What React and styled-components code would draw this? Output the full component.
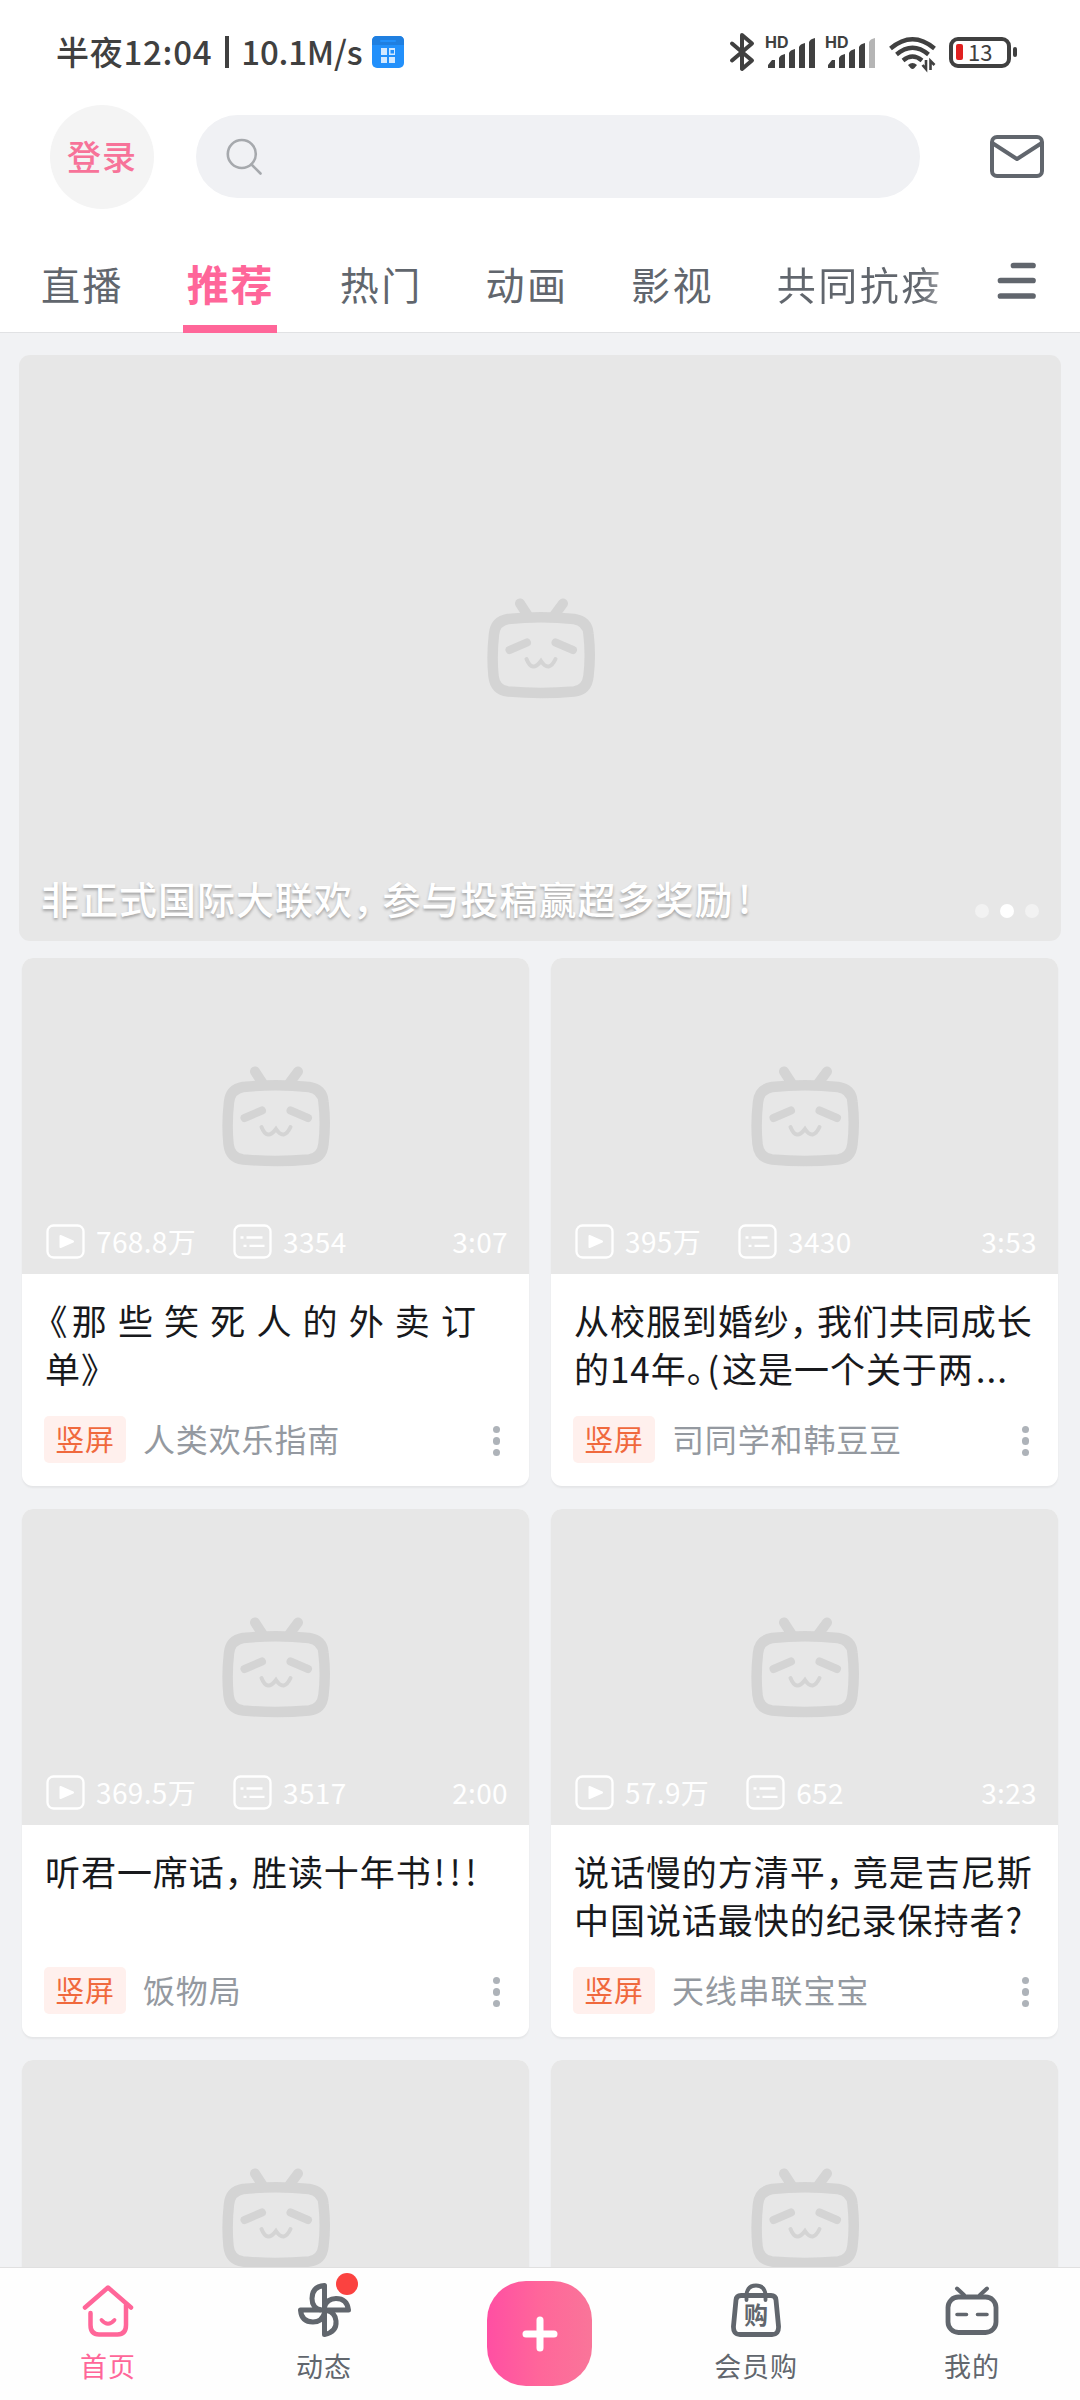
import React from 'react'
import styled, { createGlobalStyle, css } from 'styled-components'

const GlobalStyle = createGlobalStyle`
  * {
    box-sizing: border-box;
  }
  body {
    margin: 0;
    background: #f1f2f4;
    font-family: "Noto Sans CJK SC", "Noto Sans", sans-serif;
  }
`

const Page = styled.div`
  width: 1080px;
  height: 2400px;
  display: flex;
  flex-direction: column;
  overflow: hidden;
  background: #f1f2f4;
`

/* header */
const Header = styled.header`
  height: 333px;
  flex: none;
  background: #fff;
  border-bottom: 1px solid #e1e2e4;
`
const StatusBar = styled.div`
  height: 105px;
  padding: 0 63px 2px 56px;
  display: flex;
  align-items: center;
  justify-content: space-between;
  color: #404040;
`
const StatusText = styled.div`
  display: flex;
  align-items: center;
  height: 103px;
  font-size: 33px;
  font-weight: 500;
  line-height: 40px;
  white-space: pre;
  svg {
    margin-left: 10px;
  }
`
const Clock = styled.span`
  margin-bottom: 2px;
  letter-spacing: 0.75px;
`
const Divider = styled.i`
  width: 4px;
  height: 32px;
  margin: 0 12px 0 13px;
  background: #404040;
`
const Speed = styled.span`
  margin-bottom: 2px;
  letter-spacing: -0.2px;
`
const StatusIcons = styled.div`
  display: flex;
  align-items: center;
  svg {
    display: block;
  }
`
const SearchRow = styled.div`
  height: 104px;
  padding: 0 35px 0 50px;
  display: flex;
  align-items: center;
`
const Login = styled.div`
  width: 104px;
  height: 104px;
  border-radius: 50%;
  background: #f4f4f4;
  color: #f77399;
  font-size: 34px;
  font-weight: 500;
  letter-spacing: 1px;
  line-height: 101px;
  text-align: center;
`
const SearchBox = styled.div`
  width: 724px;
  height: 83px;
  margin: 0 69px 1px 42px;
  padding-left: 30px;
  border-radius: 42px;
  background: #f0f1f4;
  display: flex;
  align-items: center;
`
const Tabs = styled.nav`
  height: 124px;
  padding-left: 41px;
  display: flex;
`
const Tab = styled.div`
  height: 124px;
  margin-right: 62.7px;
  padding-top: 49px;
  font-size: 39px;
  line-height: 50px;
  letter-spacing: 2.5px;
  white-space: nowrap;
  color: #61666d;
  ${p => p.$active && css`
    margin: 0 63px 0 -4px;
    padding-left: 4px;
    width: 94px;
    font-size: 42px;
    font-weight: 700;
    letter-spacing: 1.7px;
    color: #ff6699;
    border-bottom: 8px solid #ff6699;
  `}
  ${p => p.$fade && css`
    margin-right: 53px;
    background: linear-gradient(90deg, #61666d 85%, #9a9da2);
    background-clip: text;
    color: transparent;
  `}
`

/* feed */
const Feed = styled.main`
  flex: 1;
  min-height: 0;
  overflow: hidden;
  padding-top: 22px;
`
const Banner = styled.section`
  position: relative;
  width: 1042px;
  height: 586px;
  margin: 0 auto 17px;
  padding-left: 1px;
  border-radius: 11px;
  background: #e7e7e7;
  display: flex;
  align-items: center;
  justify-content: center;
`
const BannerCaption = styled.div`
  position: absolute;
  left: 22px;
  right: 22px;
  bottom: 18px;
  display: flex;
  align-items: center;
  justify-content: space-between;
  color: #fff;
  font-size: 38px;
  font-weight: 500;
  line-height: 50px;
  letter-spacing: 1px;
  text-shadow: 0 2px 3px rgba(0, 0, 0, 0.3);
`
const Dots = styled.div`
  display: flex;
  gap: 11px;
  padding-top: 26px;
`
const Dot = styled.i`
  width: 14px;
  height: 14px;
  border-radius: 50%;
  background: ${p => (p.$on ? '#fff' : '#f2f2f2')};
`
const Grid = styled.section`
  padding: 0 22px;
  display: grid;
  grid-template-columns: 507px 507px;
  gap: 23px 22px;
`
const Card = styled.article`
  height: 528px;
  border-radius: 11px;
  background: #fff;
  overflow: hidden;
  box-shadow: 0 2px 2px rgba(0, 0, 0, 0.05);
`
const Thumb = styled.div`
  position: relative;
  height: 316px;
  background: #e7e7e7;
  display: flex;
  align-items: center;
  justify-content: center;
`
const Stats = styled.div`
  position: absolute;
  left: 24px;
  right: 21px;
  bottom: 15px;
  height: 36px;
  display: flex;
  align-items: center;
  color: #fff;
  font-size: 28px;
  line-height: 36px;
  letter-spacing: 0.35px;
  svg {
    margin-right: 11px;
  }
  span {
    margin: 0 37px 1px 0;
  }
  time {
    margin: 0 0 1px auto;
  }
`
const Title = styled.h3`
  height: 96px;
  margin: 22px 0 0;
  padding: 0 0 0 23px;
  font-size: 35px;
  font-weight: 400;
  line-height: 48px;
  letter-spacing: 0.95px;
  word-spacing: 1.4px;
  white-space: pre;
  color: #18191c;
`
// half-width punctuation, $l and $r give back some of the space
const Punct = styled.span`
  font-feature-settings: "halt";
  margin-left: ${p => p.$l || 0}em;
  margin-right: ${p => p.$r || 0}em;
`
const Meta = styled.div`
  height: 48px;
  margin-top: 23px;
  padding: 0 29px 0 22px;
  display: flex;
  align-items: center;
`
const Tag = styled.span`
  width: 82px;
  height: 47px;
  border-radius: 5px;
  background: #fff0ed;
  color: #f0693d;
  font-size: 29px;
  line-height: 45px;
  letter-spacing: 0.8px;
  text-align: center;
`
const Author = styled.span`
  flex: 1;
  margin: 0 0 2px 17px;
  color: #9499a0;
  font-size: 32px;
  line-height: 44px;
  letter-spacing: 0.85px;
`
const More = styled.div`
  display: flex;
  flex-direction: column;
  gap: 4px;
  padding-top: 4px;
  i {
    width: 7.5px;
    height: 7.5px;
    border-radius: 50%;
    background: #aeb3b9;
  }
`

/* bottom bar */
const BottomBar = styled.footer`
  height: 133px;
  flex: none;
  border-top: 1px solid #e0e0e0;
  background: #fefefe;
  display: grid;
  grid-template-columns: repeat(5, 1fr);
`
const NavItem = styled.div`
  position: relative;
  padding-top: 12px;
  display: flex;
  flex-direction: column;
  align-items: center;
  font-size: 27px;
  line-height: 36px;
  letter-spacing: 0.9px;
  color: ${p => (p.$active ? '#ff6699' : '#61666d')};
  svg {
    display: block;
    margin-bottom: 8px;
  }
`
const Badge = styled.b`
  position: absolute;
  left: 120px;
  top: 5px;
  width: 22px;
  height: 22px;
  border-radius: 50%;
  background: #fb4240;
`
const AddButton = styled.button`
  width: 105px;
  height: 105px;
  margin: 13px 0 0 55px;
  padding: 0;
  border: 0;
  border-radius: 39px;
  background: linear-gradient(90deg, #ff4fa3, #ff669a 50%, #f97599);
  display: flex;
  align-items: center;
  justify-content: center;
`

const TvFace = () => (
  <svg width="108" height="102" viewBox="0 0 108 102" fill="none" stroke="#d4d4d4" strokeLinecap="round">
    <path d="M33 6.500 L40.500 18 M76 6.500 L67.500 18" strokeWidth="10" />
    <path d="M21 22 Q54 18.500 87 22 Q100.500 24 101.500 37 Q104 59 101.500 79 Q100 93 87 94.500 Q54 97.500 21 94.500 Q8 93 6.500 79 Q4.500 59 7 37 Q8.500 24 21 22Z" strokeWidth="10.500" />
    <path d="M22.500 53 L40 45.500 M68.500 45.500 L86 53" strokeWidth="8" />
    <path d="M39.500 62 Q45 76 54 64 Q62 76 68.500 62" strokeWidth="4" />
  </svg>
)

const Signal = ({ weak }) => (
  <svg width="60" height="42" viewBox="0 0 60 42" fill="#404040">
    <text x="6" y="17" fontFamily="Inter, sans-serif" fontSize="16" fontWeight="700">HD</text>
    <path d="M9 37 V34 L13 29 H16 V37Z M20 37 V27 Q21 24 26 23 V37Z M30 37 V22 Q31 19 36 18 V37Z M40 37 V16 Q41 13 46 12 V37Z" />
    <path d="M50 37 V11 Q51 8 56 7 V37Z" fill={weak ? '#b5b5b5' : '#404040'} />
  </svg>
)

const PlayIcon = () => (
  <svg width="39" height="35" viewBox="0 0 39 35" fill="none" stroke="#fff" strokeWidth="2.300">
    <rect x="1.500" y="1.500" width="36" height="32" rx="6" />
    <path d="M14.500 12 L27 17.500 L14.500 23Z" fill="#fff" strokeWidth="2" strokeLinejoin="round" />
  </svg>
)

const ListIcon = () => (
  <svg width="39" height="35" viewBox="0 0 39 35" fill="none" stroke="#fff" strokeWidth="2.300">
    <rect x="1.500" y="1.500" width="36" height="32" rx="6" />
    <path d="M7.500 13.500 H10.500 M13.500 13.500 H29.500 M10.500 21.800 H13.500 M16.500 21.800 H31.500" />
  </svg>
)

const cards = [
  {
    plays: '768.8万', comments: '3354', time: '3:07', author: '人类欢乐指南',
    title: <><Punct $l={0.14} $r={0.1}>《</Punct>那 些 笑 死 人 的 外 卖 订{'\n'}单》</>,
  },
  {
    plays: '395万', comments: '3430', time: '3:53', author: '司同学和韩豆豆',
    title: <>从校服到婚纱<Punct $r={0.25}>，</Punct>我们共同成长{'\n'}的14年<Punct $r={0.06}>。</Punct><Punct $r={0.06}>(</Punct>这是一个关于两<Punct $l={0.06}>...</Punct></>,
  },
  {
    plays: '369.5万', comments: '3517', time: '2:00', author: '饭物局',
    title: <>听君一席话<Punct $r={0.25}>，</Punct>胜读十年书<Punct $l={0.06}>!</Punct><Punct $l={0.1}>!</Punct><Punct $l={0.1}>!</Punct></>,
  },
  {
    plays: '57.9万', comments: '652', time: '3:23', author: '天线串联宝宝',
    title: <>说话慢的方清平<Punct $r={0.25}>，</Punct>竟是吉尼斯{'\n'}中国说话最快的纪录保持者?</>,
  },
  {},
  {},
]

const VideoCard = ({ plays, comments, time, title, author }) => (
  <Card>
    <Thumb>
      <TvFace />
      {plays && (
        <Stats>
          <PlayIcon />
          <span>{plays}</span>
          <ListIcon />
          <span>{comments}</span>
          <time>{time}</time>
        </Stats>
      )}
    </Thumb>
    {title && (
      <>
        <Title>{title}</Title>
        <Meta>
          <Tag>竖屏</Tag>
          <Author>{author}</Author>
          <More><i /><i /><i /></More>
        </Meta>
      </>
    )}
  </Card>
)

const App = () => {
  return (
    <Page>
      <GlobalStyle />
      <Header>
        <StatusBar>
          <StatusText>
            <Clock>半夜12:04</Clock>
            <Divider />
            <Speed>10.1M/s</Speed>
            <svg width="32" height="32" viewBox="0 0 32 32">
              <rect width="32" height="32" rx="5" fill="#2290fb" />
              <path d="M0 9 V5 Q0 0 5 0 H27 Q32 0 32 5 V9Z" fill="#1f7fe0" />
              <rect x="8" y="4" width="16" height="2" rx="1" fill="#2290fb" />
              <path d="M9 12 H15 V19 H9Z M17 12 H23 V19 H17Z M9 21 H15 V27 H9Z M17 21 H23 V27 H17Z" fill="#d3e9ff" />
              <rect x="18.500" y="14" width="3.500" height="3.500" fill="#2290fb" />
            </svg>
          </StatusText>
          <StatusIcons>
            <svg width="31" height="42" viewBox="0 0 31 42" fill="none" stroke="#404040" strokeWidth="4" strokeLinecap="round" strokeLinejoin="round">
              <path d="M4 12.500 L24 29.500 L14 38 V4 L24 12.500 L4 29.500" />
            </svg>
            <Signal />
            <Signal weak />
            <svg width="68" height="42" viewBox="-1.500 0 68 42" fill="none" stroke="#404040" strokeWidth="4.300">
              <path d="M10 17.500 Q32 -1 54 17.500 M16 23.500 Q32 10 48 23.500 M22.500 29.500 Q32 21.500 41.500 29.500" />
              <path d="M27.500 34 Q32 30 36.500 34 L34 37 Q32 39 30 37Z" fill="#404040" stroke="none" />
              <path d="M45.500 29 V38 L42 34 M50 39 V30 L54 34" strokeWidth="2.600" />
            </svg>
            <svg width="70" height="42" viewBox="0 0 70 42" fill="none">
              <rect x="4" y="8" width="58" height="27" rx="7" stroke="#404040" strokeWidth="4" />
              <rect x="66" y="16" width="4" height="10" rx="2" fill="#404040" />
              <rect x="9" y="13" width="7" height="16" rx="2" fill="#e02020" />
              <text x="21" y="29.500" fontFamily="Noto Sans CJK SC, sans-serif" fontSize="22" fontWeight="400" fill="#404040">13</text>
            </svg>
          </StatusIcons>
        </StatusBar>
        <SearchRow>
          <Login>登录</Login>
          <SearchBox>
            <svg width="38" height="38" viewBox="0 0 38 38" fill="none" stroke="#a6a9ad" strokeWidth="2.600" strokeLinecap="round">
              <circle cx="15.800" cy="16" r="14" />
              <path d="M25.500 26.500 L34.500 35.500" />
            </svg>
          </SearchBox>
          <svg width="56" height="46" viewBox="0 0 56 46" fill="none" stroke="#61666d" strokeWidth="4" strokeLinejoin="round">
            <rect x="3" y="3" width="50" height="39" rx="5" />
            <path d="M4 9.500 L28 25 L52 9.500" />
          </svg>
        </SearchRow>
        <Tabs>
          <Tab>直播</Tab>
          <Tab $active>推荐</Tab>
          <Tab>热门</Tab>
          <Tab>动画</Tab>
          <Tab>影视</Tab>
          <Tab $fade>共同抗疫</Tab>
          <svg width="42" height="124" viewBox="0 0 42 124" fill="none" stroke="#61666d" strokeWidth="5.700" strokeLinecap="round">
            <path d="M17.500 56.500 H37 M4.500 71.500 H37 M4.500 87 H37" />
          </svg>
        </Tabs>
      </Header>

      <Feed>
        <Banner>
          <TvFace />
          <BannerCaption>
            <span>非正式国际大联欢<Punct $r={0.25}>，</Punct>参与投稿赢超多奖励<Punct $l={0.12}>!</Punct></span>
            <Dots>
              <Dot />
              <Dot $on />
              <Dot />
            </Dots>
          </BannerCaption>
        </Banner>
        <Grid>
          {cards.map((card, i) => <VideoCard key={i} {...card} />)}
        </Grid>
      </Feed>

      <BottomBar>
        <NavItem $active>
          <svg width="56" height="60" viewBox="0 0 56 60" fill="none" stroke="#ff6699" strokeWidth="4.500" strokeLinecap="round" strokeLinejoin="round">
            <path d="M5 27.500 L28 7.500 L51 27.500" />
            <path d="M10.500 33 V45 Q10.500 54.500 19 54.500 H37.500 Q46 54.500 46 45 V25" />
            <path d="M21.500 40 Q28 47.500 34.500 40" strokeWidth="3.800" />
          </svg>
          首页
        </NavItem>
        <NavItem>
          <svg width="56" height="60" viewBox="0 0 56 60" fill="none" stroke="#61666d" strokeWidth="5" strokeLinejoin="round">
            <path d="M28.500 30 V5.500 Q16 6.500 16 18.500 Q16 28 25 30" />
            <path d="M28.500 30 H52.500 Q51 18.500 40 18.500 Q31 18.500 28.500 27" />
            <path d="M28.500 30 V54.500 Q41 52 40 41 Q39 32 31 30.500" />
            <path d="M28.500 30 H4.500 Q5.500 42 17 42 Q26 42 28.500 33" />
          </svg>
          动态
          <Badge />
        </NavItem>
        <AddButton>
          <svg width="40" height="40" viewBox="0 0 40 40" stroke="#fff" strokeWidth="7" strokeLinecap="round">
            <path d="M20 6 V34 M6 20 H34" />
          </svg>
        </AddButton>
        <NavItem>
          <svg width="56" height="60" viewBox="0 0 56 60" fill="none" stroke="#61666d" strokeWidth="4.800" strokeLinecap="round" strokeLinejoin="round">
            <path d="M13 15.500 H43 Q47.500 15.500 48 20 L50.500 46 Q51 54.500 44 54.500 H12 Q5 54.500 5.500 46 L8 20 Q8.500 15.500 13 15.500Z" />
            <path d="M18.500 20 V14.500 Q19.500 5.500 28 5.500 Q36.500 5.500 37.500 14.500 V20" strokeWidth="3.800" />
            <text x="16" y="43.500" fontSize="24" fontWeight="700" fill="#61666d" stroke="none" letterSpacing="0">购</text>
          </svg>
          会员购
        </NavItem>
        <NavItem>
          <svg width="56" height="60" viewBox="0 0 56 60" fill="none" stroke="#61666d" strokeWidth="4.800" strokeLinecap="round" strokeLinejoin="round">
            <rect x="4" y="17" width="48" height="35.500" rx="10.500" />
            <path d="M13 8.500 L20 15 M43 8.500 L36 15" strokeWidth="4" />
            <path d="M13 34.500 H22.500 M33.500 34.500 H43" strokeWidth="3.600" />
          </svg>
          我的
        </NavItem>
      </BottomBar>
    </Page>
  )
}

export default App
